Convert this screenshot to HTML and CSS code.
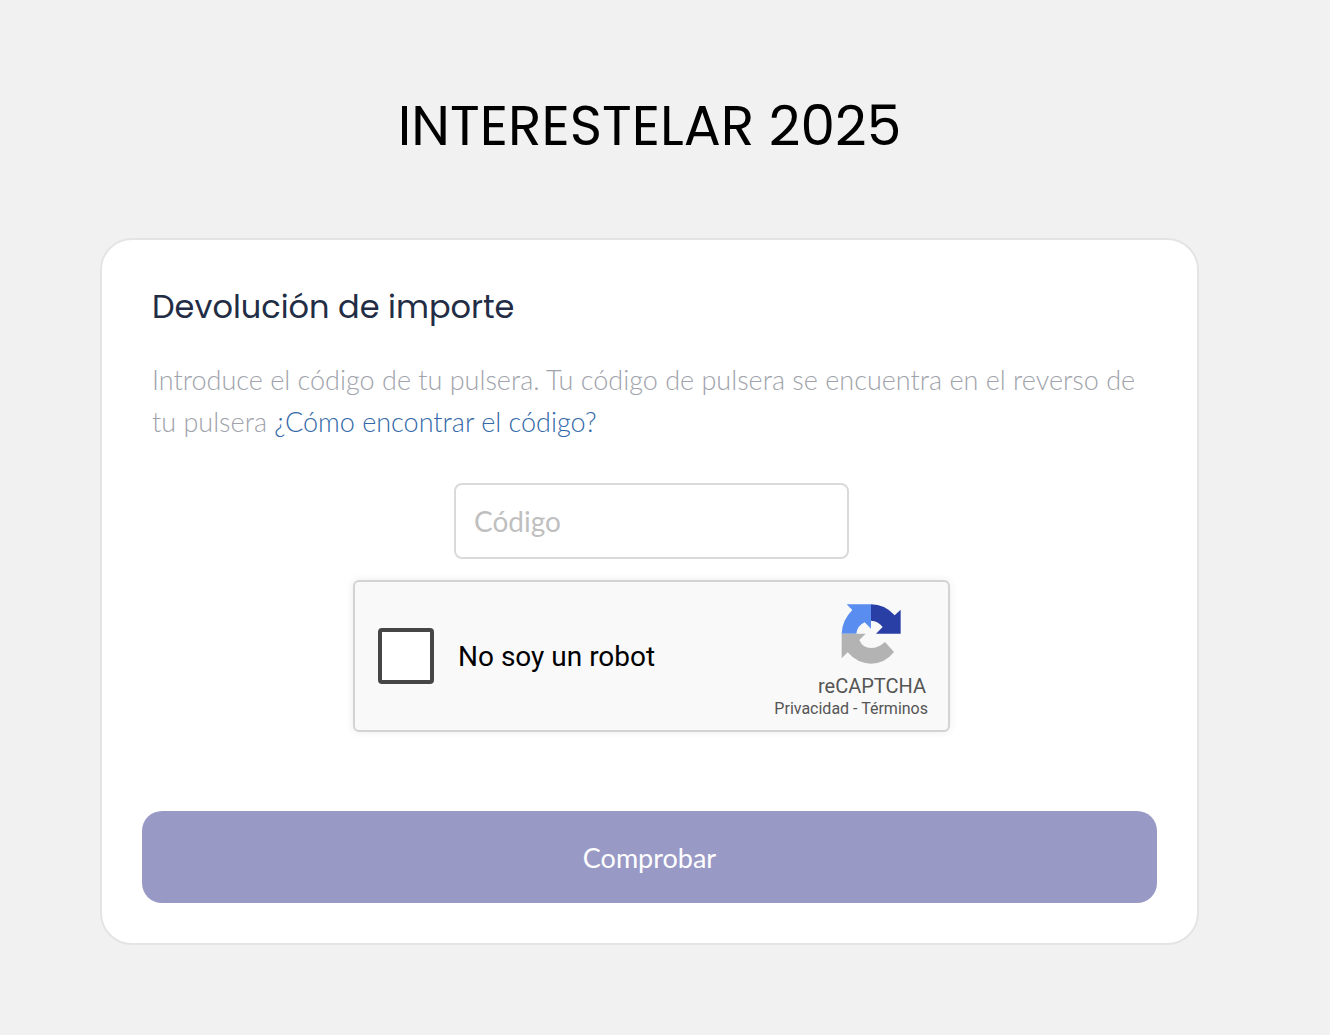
FILE: index.html
```html
<!DOCTYPE html>
<html lang="es">
<head>
  <meta charset="UTF-8">
  <meta name="viewport" content="width=device-width, initial-scale=1.0">
  <title>INTERESTELAR 2025</title>
  <link rel="stylesheet" href="styles.css">
</head>
<body>
  <main class="pagina">
    <h1 class="titulo">INTERESTELAR 2025</h1>

    <form class="tarjeta">
      <div class="intro">
        <h2>Devolución de importe</h2>
        <p>Introduce el código de tu pulsera. Tu código de pulsera se encuentra en el reverso de tu pulsera <a href="#">¿Cómo encontrar el código?</a></p>
      </div>

      <div class="campos">
        <input class="codigo" type="text" id="codigo" name="codigo" placeholder="Código" aria-label="Código">

        <div class="captcha">
          <label class="captcha-check" for="robot">
            <input type="checkbox" id="robot" name="robot">
            No soy un robot
          </label>
          <div class="captcha-marca">
            <svg class="captcha-logo" viewBox="60 40 186 186" aria-hidden="true">
              <path fill="#5a8df0" d="M80 44H153V117L134 98Q112 108 109 132H65Q66 92 97 61Z"/>
              <path fill="#2a3fa5" d="M153 44Q195 44 224 77L242 60V132H168L188 112Q175 94 153 93Z"/>
              <path fill="#b3b3b3" d="M65 132H137L118 151Q128 175 153 175Q175 175 195 157L222 187Q194 222 153 222Q111 221 83 188L65 206Z"/>
            </svg>
            <div class="captcha-nombre">reCAPTCHA</div>
            <div class="captcha-enlaces"><a href="#">Privacidad</a> - <a href="#">Términos</a></div>
          </div>
        </div>
      </div>

      <button class="comprobar" type="submit">Comprobar</button>
    </form>
  </main>
</body>
</html>
```

FILE: styles.css
```css
* {
  box-sizing: border-box;
}
body {
  margin: 0;
  background-color: #f1f1f1;
  font-family: Lato, sans-serif;
  font-size: 27px;
}
.pagina {
  padding: 84px 131px 90px 100px;
}
.titulo {
  margin: 0 0 70px;
  font-family: Poppins, Inter, sans-serif;
  font-size: 55px;
  font-weight: 400;
  line-height: 84px;
  text-align: center;
  color: #000;
}
.tarjeta {
  padding: 40px;
  background-color: #fff;
  border: 2px solid #e4e4e4;
  border-radius: 32px;
}
.intro {
  padding: 0 10px;
}
.intro h2 {
  margin: 0 0 25px;
  font-family: Poppins, Inter, sans-serif;
  font-size: 32px;
  font-weight: 400;
  line-height: 54px;
  color: #222d45;
}
.intro p {
  margin: 0;
  font-weight: 300;
  line-height: 42px;
  color: #a0a3ab;
}
.intro a {
  color: #3469a8;
  text-decoration: none;
}
.campos {
  display: flex;
  flex-direction: column;
  align-items: center;
  gap: 21px;
  margin: 40px 0 79px;
  padding-left: 4px;
}
.codigo {
  width: 395px;
  max-width: 100%;
  height: 76px;
  padding: 0 18px;
  background-color: #fff;
  border: 2px solid #dadada;
  border-radius: 8px;
  font-family: inherit;
  font-size: 28px;
}
.codigo::placeholder {
  color: #bfbfbf;
}
.captcha {
  display: flex;
  justify-content: space-between;
  align-items: center;
  width: 597px;
  max-width: 100%;
  height: 152px;
  padding: 0 20px 0 23px;
  background-color: #f9f9f9;
  border: 2px solid #d3d3d3;
  border-radius: 6px;
  box-shadow: 0 0 8px rgba(0, 0, 0, 0.08);
  font-family: Roboto, sans-serif;
  font-size: 28px;
}
.captcha-check {
  display: flex;
  align-items: center;
  gap: 24px;
  color: #000;
}
.captcha-check input {
  appearance: none;
  width: 56px;
  height: 56px;
  margin: 0;
  background-color: #fff;
  border: 4px solid #464646;
  border-radius: 4px;
}
.captcha-check input:checked {
  background-color: #5a8df0;
}
.captcha-marca {
  display: flex;
  flex-direction: column;
  align-items: flex-end;
  padding-top: 10px;
  color: #555;
}
.captcha-logo {
  width: 62px;
  height: 62px;
  margin: 0 26px 9px 0;
}
.captcha-nombre {
  padding-right: 2px;
  font-size: 20px;
  line-height: 24px;
}
.captcha-enlaces {
  font-size: 16px;
  line-height: 22px;
}
.captcha-enlaces a {
  color: inherit;
  text-decoration: none;
}
.comprobar {
  display: block;
  width: 100%;
  height: 92px;
  background-color: #9999c6;
  border: none;
  border-radius: 20px;
  font-family: inherit;
  font-size: 27px;
  color: #fff;
}
```
